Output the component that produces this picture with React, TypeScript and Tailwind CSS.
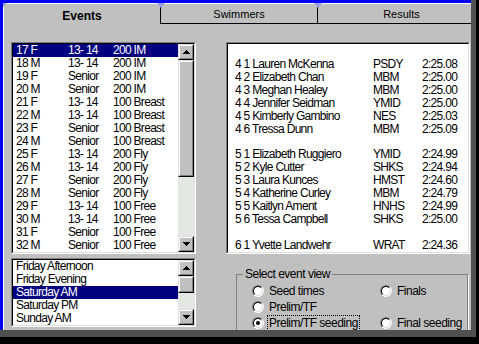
import React from 'react';

const events: [string, string, string][] = [
  ['17 F', '13- 14', '200 IM'],
  ['18 M', '13- 14', '200 IM'],
  ['19 F', 'Senior', '200 IM'],
  ['20 M', 'Senior', '200 IM'],
  ['21 F', '13- 14', '100 Breast'],
  ['22 M', '13- 14', '100 Breast'],
  ['23 F', 'Senior', '100 Breast'],
  ['24 M', 'Senior', '100 Breast'],
  ['25 F', '13- 14', '200 Fly'],
  ['26 M', '13- 14', '200 Fly'],
  ['27 F', 'Senior', '200 Fly'],
  ['28 M', 'Senior', '200 Fly'],
  ['29 F', '13- 14', '100 Free'],
  ['30 M', '13- 14', '100 Free'],
  ['31 F', 'Senior', '100 Free'],
  ['32 M', 'Senior', '100 Free'],
];

const sessions = ['Friday Afternoon', 'Friday Evening', 'Saturday AM', 'Saturday PM', 'Sunday AM'];

// null = blank line in the listing
const seeding: ([string, string, string] | null)[] = [
  null,
  ['4 1 Lauren McKenna', 'PSDY', '2:25.08'],
  ['4 2 Elizabeth Chan', 'MBM', '2:25.00'],
  ['4 3 Meghan Healey', 'MBM', '2:25.00'],
  ['4 4 Jennifer Seidman', 'YMID', '2:25.00'],
  ['4 5 Kimberly Gambino', 'NES', '2:25.03'],
  ['4 6 Tressa Dunn', 'MBM', '2:25.09'],
  null,
  ['5 1 Elizabeth Ruggiero', 'YMID', '2:24.99'],
  ['5 2 Kyle Cutter', 'SHKS', '2:24.94'],
  ['5 3 Laura Kunces', 'HMST', '2:24.60'],
  ['5 4 Katherine Curley', 'MBM', '2:24.79'],
  ['5 5 Kaitlyn Ament', 'HNHS', '2:24.99'],
  ['5 6 Tessa Campbell', 'SHKS', '2:25.00'],
  null,
  ['6 1 Yvette Landwehr', 'WRAT', '2:24.36'],
];

function Raised({ className = '', children }: { className?: string; children?: React.ReactNode }) {
  return (
    <div className={`shrink-0 border border-t-[#dfdfdf] border-l-[#dfdfdf] border-r-black border-b-black ${className}`}>
      <div className="w-full h-full border border-t-white border-l-white border-r-[#808080] border-b-[#808080] bg-[#c0c0c0] flex items-center justify-center">
        {children}
      </div>
    </div>
  );
}

function Arrow({ down }: { down?: boolean }) {
  return (
    <svg width="7" height="4" shapeRendering="crispEdges">
      <polygon points={down ? '0,0 7,0 3.5,4' : '3.5,0 7,4 0,4'} fill="#000" />
    </svg>
  );
}

function ScrollBar({ thumb }: { thumb: number }) {
  return (
    <div className="w-[16px] h-full flex flex-col shrink-0">
      <Raised className="h-[16px]">
        <Arrow />
      </Raised>
      <Raised className="w-[16px]" >
        <div style={{ height: thumb - 4 }} />
      </Raised>
      <div className="flex-1 bg-[#e3e8e3]" />
      <Raised className="h-[16px]">
        <Arrow down />
      </Raised>
    </div>
  );
}

function Sunken({ className = '', children }: { className?: string; children?: React.ReactNode }) {
  return (
    <div className={`shrink-0 border border-t-[#808080] border-l-[#808080] border-r-white border-b-white ${className}`}>
      <div className="w-full h-full border border-t-black border-l-black border-r-[#dfdfdf] border-b-[#dfdfdf] bg-white flex overflow-hidden">
        {children}
      </div>
    </div>
  );
}

function Radio({ label, checked, focus }: { label: string; checked?: boolean; focus?: boolean }) {
  return (
    <div className="h-[16px] flex items-center">
      <div className="w-[12px] h-[12px] rounded-full border border-t-[#808080] border-l-[#808080] border-r-white border-b-white">
        <div className="w-full h-full rounded-full border border-t-black border-l-black border-r-[#dfdfdf] border-b-[#dfdfdf] bg-white flex items-center justify-center">
          {checked && <div className="w-[4px] h-[4px] rounded-full bg-black" />}
        </div>
      </div>
      <span
        className={`ml-[4px] px-[1px] leading-[14px] ${focus ? 'outline outline-1 outline-dotted outline-black' : ''}`}
      >
        {label}
      </span>
    </div>
  );
}

export default function App() {
  return (
    <div className="w-[479px] h-[344px] bg-black overflow-hidden font-['Liberation_Sans',Arial,sans-serif] text-[12px] text-black">
      <div className="w-[476px] h-[337px] bg-[#505050]">
        <div className="w-[471px] h-[330px] border-l-[3px] border-t-[3px] border-[#0000f8] bg-[#c0c0c0] flex flex-col overflow-hidden">
          {/* tabs */}
          <div className="relative h-[21px] flex shrink-0">
            <div className="w-[158px] border-t border-l border-t-white border-l-white border-r border-r-black flex justify-center pt-[3px] font-bold">
              Events
            </div>
            <div className="w-[157px] border-t border-t-white border-b border-b-black border-r border-r-black flex justify-center pt-[2px] text-[11px]">
              Swimmers
            </div>
            <div className="flex-1 border-t border-t-white border-b border-b-black flex justify-center pt-[2px] pl-[14px] text-[11px]">
              Results
            </div>
            <svg className="absolute left-0 top-0" width="4" height="4">
              <polygon points="0,0 4,0 0,4" fill="#9a9ae6" />
            </svg>
            <svg className="absolute left-[154px] top-0" width="8" height="5">
              <polygon points="0,0 8,0 4,5" fill="#9a9ae6" />
            </svg>
            <svg className="absolute left-[311px] top-0" width="8" height="5">
              <polygon points="0,0 8,0 4,5" fill="#9a9ae6" />
            </svg>
          </div>

          <div className="flex-1 border-l border-l-white pl-[7px] pt-[18px] tracking-[-0.7px]">
            <div className="flex">
              <Sunken className="w-[185px] h-[212px]">
                <div className="flex-1 flex flex-col">
                  {events.map(([no, age, name], i) => (
                    <div
                      key={no}
                      className={`h-[13px] leading-[13px] flex pl-[3px] whitespace-nowrap ${
                        i === 0 ? 'bg-[#000080] text-white' : ''
                      }`}
                    >
                      <span className="w-[52px]">{no}</span>
                      <span className="w-[45px]">{age}</span>
                      <span>{name}</span>
                    </div>
                  ))}
                </div>
                <ScrollBar thumb={117} />
              </Sunken>

              <Sunken className="ml-[30px] w-[244px] h-[212px]">
                <div className="flex-1 flex flex-col pl-[7px] pt-[1px]">
                  {seeding.map((r, i) => (
                    <div key={i} className="h-[13px] leading-[13px] flex whitespace-nowrap">
                      {r && (
                        <>
                          <span className="w-[138px]">{r[0]}</span>
                          <span className="w-[49px]">{r[1]}</span>
                          <span>{r[2]}</span>
                        </>
                      )}
                    </div>
                  ))}
                </div>
              </Sunken>
            </div>

            <div className="flex items-start mt-[4px]">
              <Sunken className="w-[185px] h-[69px]">
                <div className="flex-1 flex flex-col">
                  {sessions.map((s, i) => (
                    <div
                      key={s}
                      className={`h-[13px] leading-[13px] pl-[3px] whitespace-nowrap ${
                        i === 2 ? 'bg-[#000080] text-white' : ''
                      }`}
                    >
                      {s}
                    </div>
                  ))}
                </div>
                <ScrollBar thumb={17} />
              </Sunken>

              <fieldset className="ml-[40px] mt-[9px] w-[232px] h-[80px] border border-[#808080] shadow-[1px_1px_0_#fff] tracking-[-0.5px]">
                <legend className="ml-[6px] px-[2px] leading-[14px]">Select event view</legend>
                <div className="grid grid-cols-[128px_1fr] pl-[15px] pt-[2px]">
                  <Radio label="Seed times" />
                  <Radio label="Finals" />
                  <Radio label="Prelim/TF" />
                  <div />
                  <Radio label="Prelim/TF seeding" checked focus />
                  <Radio label="Final seeding" />
                </div>
              </fieldset>
            </div>
          </div>
        </div>
      </div>
    </div>
  );
}
